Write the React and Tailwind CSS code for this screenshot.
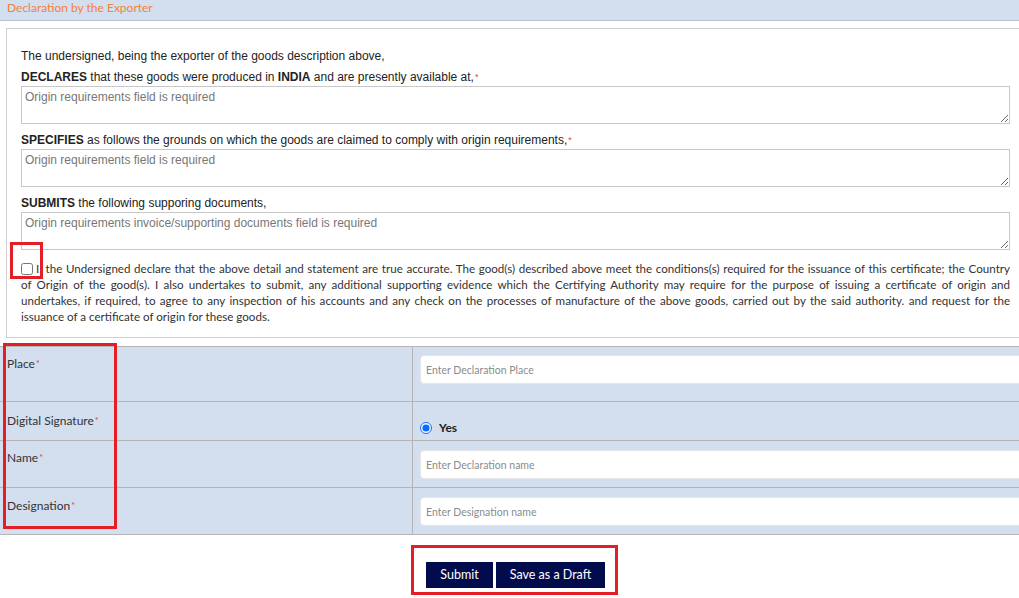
import React from 'react';

const segoe = "font-['Lato','Open_Sans',sans-serif]";
const arial = "font-['Liberation_Sans',Arial,sans-serif]";

function Req() {
  return <sup className="relative -top-[1px] ml-[1px] text-[9px] text-[#e8403a]">*</sup>;
}

function Field({ label, children, height, padTop }) {
  return (
    <div className={`flex border-b border-[#b5b5b5] ${height}`}>
      <div className={`w-[413px] shrink-0 border-r border-[#b5b5b5] pl-[7px] ${padTop} text-[12px] leading-[16px] text-[#333]`}>
        {label}
        <Req />
      </div>
      <div className="flex-1 pl-[7px]">{children}</div>
    </div>
  );
}

function TextInput({ placeholder }) {
  return (
    <input
      type="text"
      placeholder={placeholder}
      className="block h-[29px] w-[640px] rounded-[4px] border border-[#e3e6ea] bg-white px-[5px] text-[10.5px] text-[#333] outline-none placeholder:text-[#8c8c8c]"
    />
  );
}

function OriginBox({ placeholder }) {
  return (
    <textarea
      rows={2}
      placeholder={placeholder}
      className="mt-[2px] block h-[38px] w-[989px] border border-[#c8c8c8] px-[3px] py-[3px] text-[12px] leading-[14px] outline-none placeholder:text-[#777]"
    />
  );
}

export default function App() {
  // first three lines are stretched edge to edge, the last one sits left
  const lines = [
    'the Undersigned declare that the above detail and statement are true accurate. The good(s) described above meet the conditions(s) required for the issuance of this certificate; the Country',
    'of Origin of the good(s). I also undertakes to submit, any additional supporting evidence which the Certifying Authority may require for the purpose of issuing a certificate of origin and',
    'undertakes, if required, to agree to any inspection of his accounts and any check on the processes of manufacture of the above goods, carried out by the said authority. and request for the',
  ];

  return (
    <div className={`relative h-[598px] w-[1019px] overflow-hidden bg-white ${segoe}`}>
      <div className="w-[1031px]">
        {/* section heading */}
        <div className="h-[21px] border-b border-[#b9c0cb] bg-[#d3deee] pl-[7px]">
          <span className="block text-[12px] leading-[15px] text-[#f4813f]">Declaration by the Exporter</span>
        </div>

        {/* declaration statements */}
        <div className="ml-[6px] mt-[7px] border border-[#cfcfcf] pb-[12px] pl-[14px] pt-[20px]">
          <div className={`${arial} text-[12px] leading-[14px] text-[#222]`}>
            <p>The undersigned, being the exporter of the goods description above,</p>
            <p className="mt-[7px]">
              <b>DECLARES</b> that these goods were produced in <b>INDIA</b> and are presently available at,
              <Req />
            </p>
            <OriginBox placeholder="Origin requirements field is required" />
            <p className="mt-[9px]">
              <b>SPECIFIES</b> as follows the grounds on which the goods are claimed to comply with origin requirements,
              <Req />
            </p>
            <OriginBox placeholder="Origin requirements field is required" />
            <p className="mt-[9px]">
              <b>SUBMITS</b> the following supporing documents,
            </p>
            <OriginBox placeholder="Origin requirements invoice/supporting documents field is required" />
          </div>

          <div className="mt-[11px] w-[989px] text-[11.6px] leading-[16px] text-[#333]">
            {lines.map((line, i) => (
              <div key={i} className="flex items-center">
                {i === 0 && <input type="checkbox" readOnly className="m-0 mr-[3px] h-[12px] w-[12px] shrink-0" />}
                <span className="min-w-0 flex-1 [text-align-last:justify]">
                  {i === 0 ? 'I, ' : ''}
                  {line}
                </span>
              </div>
            ))}
            <div>issuance of a certificate of origin for these goods.</div>
          </div>
        </div>

        {/* place / signature / name / designation */}
        <div className="mt-[8px] border-t border-[#b5b5b5] bg-[#d3deee]">
          <Field label="Place" height="h-[55px]" padTop="pt-[9px]">
            <div className="pt-[8px]">
              <TextInput placeholder="Enter Declaration Place" />
            </div>
          </Field>
          <Field label="Digital Signature" height="h-[39px]" padTop="pt-[11px]">
            <label className="flex items-center pt-[18px] text-[12px] font-bold leading-[16px] text-[#222]">
              <input type="radio" checked readOnly className="m-0 mr-[7px] h-[12px] w-[12px] accent-[#0a6cff]" />
              Yes
            </label>
          </Field>
          <Field label="Name" height="h-[47px]" padTop="pt-[9px]">
            <div className="pt-[9px]">
              <TextInput placeholder="Enter Declaration name" />
            </div>
          </Field>
          <Field label="Designation" height="h-[47px]" padTop="pt-[10px]">
            <div className="pt-[9px]">
              <TextInput placeholder="Enter Designation name" />
            </div>
          </Field>
        </div>

        <div className="mt-[27px] flex justify-center gap-[3px]">
          <button className="h-[26px] w-[67px] bg-[#020c4c] text-[12.5px] text-white">Submit</button>
          <button className="h-[26px] w-[109px] bg-[#020c4c] text-[12.5px] text-white">Save as a Draft</button>
        </div>
      </div>

      {/* red callout frames */}
      <div className="absolute left-[10px] top-[242px] h-[37px] w-[33px] border-[3px] border-[#e41e26]" />
      <div className="absolute left-[3px] top-[343px] h-[186px] w-[114px] border-[3px] border-[#e41e26]" />
      <div className="absolute left-[411px] top-[545px] h-[50px] w-[207px] border-[3px] border-[#e41e26]" />
    </div>
  );
}
